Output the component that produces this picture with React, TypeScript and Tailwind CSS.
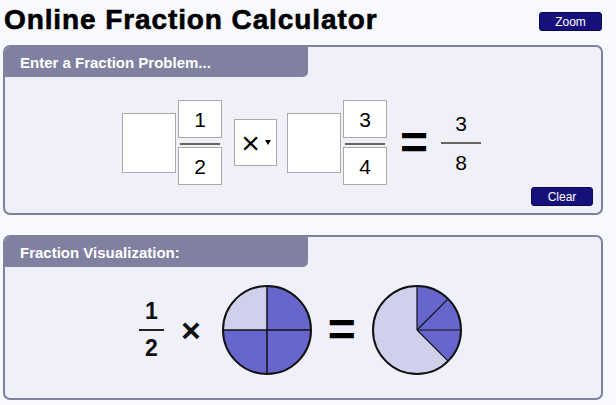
import React from "react";

const DARK = "#6666cc";
const LIGHT = "#d0d0ec";

function WholeBox() {
  return <div className="w-[54px] h-[60px] bg-white border border-[#aaaaaa]" />;
}

function FracInput({ n, d }: { n: string; d: string }) {
  return (
    <div className="flex flex-col items-center w-[44px]">
      <div className="w-[44px] h-[38px] bg-white border border-[#aaaaaa] flex items-center justify-center text-[21px] leading-none text-black">
        {n}
      </div>
      <div className="w-[40px] h-[2px] bg-[#666666] mt-[5px] mb-[2px]" />
      <div className="w-[44px] h-[38px] bg-white border border-[#aaaaaa] flex items-center justify-center text-[21px] leading-none text-black">
        {d}
      </div>
    </div>
  );
}

function Pie1() {
  return (
    <svg width="92" height="92" viewBox="0 0 92 92">
      <circle cx="46" cy="46" r="44" fill={DARK} />
      <path d="M46 46 L46 2 A44 44 0 0 0 2 46 Z" fill={LIGHT} />
      <path d="M46 2 V90 M2 46 H90" stroke="#111" strokeWidth="1.5" fill="none" />
      <circle cx="46" cy="46" r="44" fill="none" stroke="#111" strokeWidth="2" />
    </svg>
  );
}

function Pie2() {
  return (
    <svg width="92" height="92" viewBox="0 0 92 92">
      <circle cx="46" cy="46" r="44" fill={LIGHT} />
      <path d="M46 46 L46 2 A44 44 0 0 1 77.11 77.11 Z" fill={DARK} />
      <path
        d="M46 46 L46 2 M46 46 L77.11 14.89 M46 46 L90 46 M46 46 L77.11 77.11"
        stroke="#111"
        strokeWidth="1.2"
        fill="none"
      />
      <circle cx="46" cy="46" r="44" fill="none" stroke="#111" strokeWidth="2" />
    </svg>
  );
}

function Tab({ children }: { children: React.ReactNode }) {
  return (
    <div className="w-[303px] h-[30px] bg-[#8080a0] rounded-br-[5px] flex items-center pl-[15px] text-white font-bold text-[15px] leading-none">
      {children}
    </div>
  );
}

export default function App() {
  return (
    <div className="w-[616px] h-[405px] overflow-hidden bg-[#f8f8ff] font-['Liberation_Sans',Arial,sans-serif] flex flex-col">
      <div className="flex items-start justify-between pl-[4px] pr-[14px] pt-[6px]">
        <h1 className="text-[28px] leading-[28px] font-bold text-black tracking-[0.9px] [-webkit-text-stroke:0.6px_black]">
          Online Fraction Calculator
        </h1>
        <button className="mt-[6px] w-[63px] h-[19px] bg-[#16107a] border border-[#0a0850] rounded-[3px] text-white text-[12px] leading-none flex items-center justify-center">
          Zoom
        </button>
      </div>

      <div className="mt-[11px] ml-[3px] w-[600px] h-[170px] border-2 border-[#8080a0] rounded-[7px] bg-[#f0f0f8] overflow-hidden flex flex-col">
        <Tab>Enter a Fraction Problem...</Tab>
        <div className="mt-[23px] pl-[117px] flex items-center">
          <WholeBox />
          <div className="ml-[2px]">
            <FracInput n="1" d="2" />
          </div>
          <div className="ml-[12px] w-[43px] h-[47px] bg-white border border-[#aaaaaa] flex items-center justify-center gap-[5px] pl-[1px]">
            <span className="text-[32px] leading-none text-black">×</span>
            <span className="w-0 h-0 border-l-[3px] border-r-[3px] border-t-[5px] border-l-transparent border-r-transparent border-t-black" />
          </div>
          <div className="ml-[10px]">
            <WholeBox />
          </div>
          <div className="ml-[2px]">
            <FracInput n="3" d="4" />
          </div>
          <div className="ml-[15px] w-[24px] flex items-center justify-center text-[48px] font-bold leading-none text-black">
            =
          </div>
          <div className="ml-[15px] w-[40px] flex flex-col items-center text-[21px] leading-none text-black">
            <span className="mb-[8px]">3</span>
            <div className="w-[40px] h-[2px] bg-[#666666]" />
            <span className="mt-[8px]">8</span>
          </div>
        </div>
        <div className="mt-[2px] flex justify-end pr-[8px]">
          <button className="w-[62px] h-[19px] bg-[#16107a] border border-[#0a0850] rounded-[3px] text-white text-[12px] leading-none flex items-center justify-center">
            Clear
          </button>
        </div>
      </div>

      <div className="mt-[20px] ml-[3px] w-[600px] h-[165px] border-2 border-[#8080a0] rounded-[7px] bg-[#f0f0f8] overflow-hidden flex flex-col">
        <Tab>Fraction Visualization:</Tab>
        <div className="mt-[17px] pl-[134px] flex items-center">
          <div className="w-[25px] flex flex-col items-center font-bold text-[23px] leading-none text-[#111]">
            <span className="mb-[6px]">1</span>
            <div className="w-[25px] h-[2px] bg-[#222]" />
            <span className="mt-[6px]">2</span>
          </div>
          <div className="ml-[17px] text-[34px] font-bold leading-none text-[#111]">×</div>
          <div className="ml-[20px]">
            <Pie1 />
          </div>
          <div className="ml-[17px] w-[24px] flex items-center justify-center text-[48px] font-bold leading-none text-black">
            =
          </div>
          <div className="ml-[17px]">
            <Pie2 />
          </div>
        </div>
      </div>
    </div>
  );
}
